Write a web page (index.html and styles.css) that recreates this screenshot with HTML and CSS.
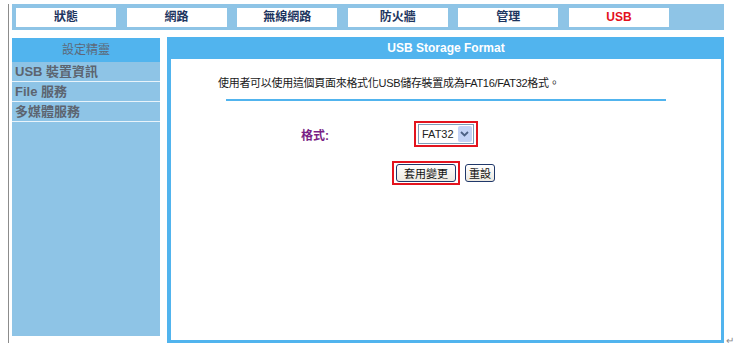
FILE: index.html
```html
<!DOCTYPE html>
<html lang="zh-Hant">
<head>
    <meta charset="UTF-8">
    <meta name="viewport" content="width=device-width, initial-scale=1.0">
    <title>USB Storage Format</title>
    <link rel="stylesheet" href="styles.css">
</head>
<body>
    <div class="page">
        <nav class="topbar">
            <a class="tab">狀態</a>
            <a class="tab">網路</a>
            <a class="tab">無線網路</a>
            <a class="tab">防火牆</a>
            <a class="tab">管理</a>
            <a class="tab tab-active">USB</a>
        </nav>
        <div class="layout">
            <aside class="sidebar">
                <div class="side-head">設定精靈</div>
                <div class="side-item">USB 裝置資訊</div>
                <div class="side-item">File 服務</div>
                <div class="side-item">多媒體服務</div>
            </aside>
            <section class="panel">
                <div class="panel-head">USB Storage Format</div>
                <div class="panel-body">
                    <p class="desc">使用者可以使用這個頁面來格式化USB儲存裝置成為FAT16/FAT32格式。</p>
                    <div class="rule"></div>
                    <div class="form-row">
                        <span class="label">格式:</span>
                        <span class="mark-box">
                            <span class="select">
                                <span class="select-text">FAT32</span>
                                <span class="select-btn">
                                    <svg width="9" height="6" viewBox="0 0 9 6"><path d="M1 1 L4.5 4.5 L8 1" fill="none" stroke="#4d6185" stroke-width="1.8"/></svg>
                                </span>
                            </span>
                        </span>
                    </div>
                    <div class="btn-row">
                        <span class="mark-box">
                            <button class="btn btn-wide">套用變更</button>
                        </span>
                        <button class="btn">重設</button>
                    </div>
                </div>
            </section>
            <span class="para">↵</span>
        </div>
    </div>
</body>
</html>
```

FILE: styles.css
```css
body {
    margin: 0;
    background: #fff;
    font-family: "Liberation Sans", "Noto Sans CJK TC", sans-serif;
    font-size: 12px;
    color: #222;
}
.page {
    margin: 4px 0 0 8px;
    padding: 0 0 0 3px;
    border-left: 1px solid #8c8c8c;
    width: 725px;
}
.topbar {
    display: flex;
    gap: 10.6px;
    width: 712px;
    height: 26px;
    box-sizing: border-box;
    margin-top: 1px;
    padding: 4px 4px 3px 4px;
    background: #8ec4e6;
}
.tab {
    width: 100px;
    height: 19px;
    background: #fff;
    color: #1d3560;
    font-weight: bold;
    font-size: 12px;
    line-height: 19px;
    text-align: center;
}
.tab-active {
    color: #e3101c;
}
.layout {
    display: flex;
    margin-top: 7px;
}
.sidebar {
    width: 148px;
    height: 298px;
    margin-top: 1px;
    background: #8ec4e6;
}
.side-head {
    height: 24px;
    line-height: 24px;
    background: #51b4ee;
    color: #5d6878;
    text-align: center;
    font-size: 12px;
}
.side-item {
    height: 19px;
    line-height: 19px;
    border-bottom: 1px solid #e8f3fa;
    padding-left: 3px;
    color: #5c6470;
    font-weight: bold;
    font-size: 13px;
}
.panel {
    display: flex;
    flex-direction: column;
    width: 557px;
    height: 306px;
    box-sizing: border-box;
    margin-left: 7px;
    padding: 0 3px 3px 4px;
    background: #51b4ee;
}
.panel-head {
    height: 22px;
    line-height: 22px;
    text-align: center;
    color: #fff;
    font-weight: bold;
    font-size: 12px;
}
.panel-body {
    flex: 1;
    background: #fff;
}
.desc {
    margin: 16px 0 0 47px;
    line-height: 16px;
    font-size: 11px;
    letter-spacing: -0.3px;
    color: #1a1a1a;
}
.rule {
    width: 440px;
    height: 2px;
    margin: 8px auto 0;
    background: #51b4ee;
}
.form-row {
    display: flex;
    align-items: center;
    margin: 20px 0 0 130px;
}
.label {
    width: 113px;
    color: #7a1f86;
    font-weight: bold;
    font-size: 12px;
}
.mark-box {
    display: inline-flex;
    padding: 1px 2px;
    border: 2px solid #e3141e;
}
.select {
    display: flex;
    align-items: center;
    height: 18px;
    border: 1px solid #7f9db9;
    background: #fff;
}
.select-text {
    padding: 0 4px 0 3px;
    font-size: 11px;
    color: #222;
}
.select-btn {
    display: flex;
    align-items: center;
    justify-content: center;
    width: 14px;
    height: 16px;
    margin-right: 1px;
    background: #c4d3f6;
    border-radius: 2px;
}
.btn-row {
    display: flex;
    align-items: center;
    gap: 5px;
    margin: 14px 0 0 221px;
}
.btn {
    height: 18px;
    padding: 0 3px;
    border: 1px solid #20386a;
    border-radius: 3px;
    background: linear-gradient(#ffffff, #ece9e0);
    font-family: "Noto Sans CJK TC", sans-serif;
    font-size: 11px;
    line-height: 16px;
    color: #111;
}
.btn-wide {
    width: 60px;
}
.para {
    align-self: flex-end;
    margin: 0 0 -3px 2px;
    color: #888;
    font-size: 10px;
}
```
